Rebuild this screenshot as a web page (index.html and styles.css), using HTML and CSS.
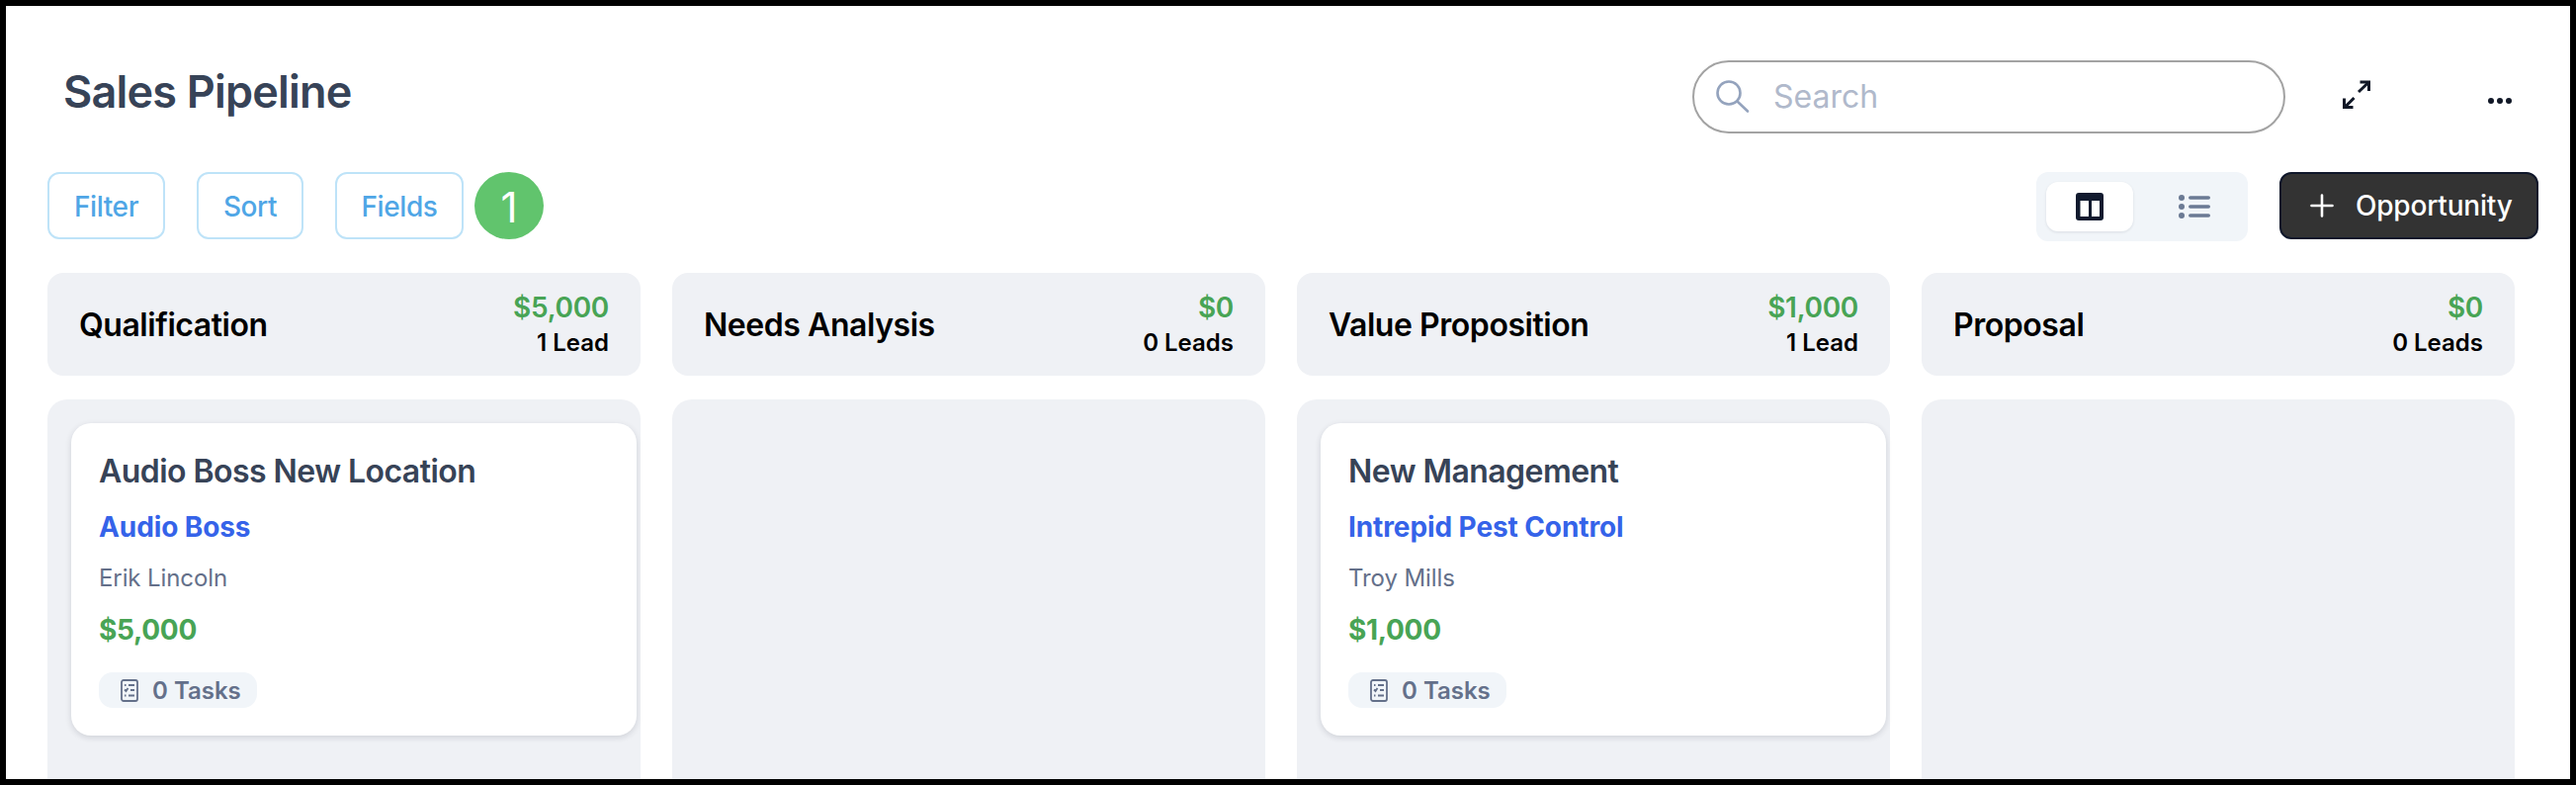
FILE: index.html
```html
<!DOCTYPE html>
<html lang="en">
<head>
<meta charset="utf-8">
<title>Sales Pipeline</title>
<link rel="stylesheet" href="styles.css">
</head>
<body>
<div class="frame">
  <header class="top">
    <h1 class="title">Sales Pipeline</h1>
    <div class="search">
      <svg class="search-icon" width="36" height="36" viewBox="0 0 36 36" fill="none" stroke="#94a3bd" stroke-width="2.6" stroke-linecap="round"><circle cx="14" cy="14" r="11.5"/><path d="M22.5 22.5L33 32.5"/></svg>
      <span class="search-text">Search</span>
    </div>
    <svg class="expand" width="30" height="30" viewBox="0 0 30 30" fill="none" stroke="#111827" stroke-width="3"><path d="M17 12L27.5 2"/><path d="M18.5 2H27.5V11"/><path d="M2.5 28L12.5 18"/><path d="M2.5 18.500V27.500H11.500"/></svg>
    <svg class="dots" width="26" height="8" viewBox="0 0 26 8" fill="#111827"><circle cx="4" cy="4" r="3"/><circle cx="13" cy="4" r="3"/><circle cx="22" cy="4" r="3"/></svg>
  </header>

  <div class="toolbar">
    <button class="ghost ghost-filter">Filter</button>
    <button class="ghost ghost-sort">Sort</button>
    <button class="ghost ghost-fields">Fields</button>
    <span class="badge">1</span>
    <div class="views">
      <span class="view active">
        <svg width="28" height="28" viewBox="0 0 28 28"><rect width="28" height="28" rx="3" fill="#111a2e"/><rect x="4.500" y="8" width="8.500" height="16" fill="#fff"/><rect x="16" y="8" width="8" height="16" fill="#fff"/></svg>
      </span>
      <span class="view">
        <svg width="32" height="24" viewBox="0 0 32 24" fill="#6b7a94"><circle cx="3" cy="3" r="3"/><circle cx="3" cy="12" r="3"/><circle cx="3" cy="21" r="3"/><rect x="10" y="1.200" width="22" height="3.600" rx="1.800"/><rect x="10" y="10.200" width="22" height="3.600" rx="1.800"/><rect x="10" y="19.200" width="22" height="3.600" rx="1.800"/></svg>
      </span>
    </div>
    <button class="primary">
      <svg width="24" height="24" viewBox="0 0 24 24" fill="none" stroke="#fff" stroke-width="2.600" stroke-linecap="round"><path d="M12 1.500V22.500M1.500 12H22.500"/></svg>
      Opportunity
    </button>
  </div>

  <div class="board">
    <section class="column">
      <div class="col-head">
        <h2 class="col-name">Qualification</h2>
        <div class="col-stats"><div class="col-amount">$5,000</div><div class="col-leads">1 Lead</div></div>
      </div>
      <div class="col-body">
        <article class="card">
          <h3 class="card-title">Audio Boss New Location</h3>
          <a class="card-company">Audio Boss</a>
          <div class="card-person">Erik Lincoln</div>
          <div class="card-amount">$5,000</div>
          <span class="tasks">
            <svg width="18" height="23" viewBox="0 0 18 23" fill="none" stroke="#64708a" stroke-width="1.800"><rect x="1" y="1" width="16" height="21" rx="2"/><path d="M4 6h1.500M8 6h6M4 10.500l1.500 1.500 2-3M10 11h4M4 16.500h1.500M8 16.500h6"/></svg>
            0 Tasks
          </span>
        </article>
      </div>
    </section>
    <section class="column">
      <div class="col-head">
        <h2 class="col-name">Needs Analysis</h2>
        <div class="col-stats"><div class="col-amount">$0</div><div class="col-leads">0 Leads</div></div>
      </div>
      <div class="col-body"></div>
    </section>
    <section class="column">
      <div class="col-head">
        <h2 class="col-name">Value Proposition</h2>
        <div class="col-stats"><div class="col-amount">$1,000</div><div class="col-leads">1 Lead</div></div>
      </div>
      <div class="col-body">
        <article class="card">
          <h3 class="card-title">New Management</h3>
          <a class="card-company">Intrepid Pest Control</a>
          <div class="card-person">Troy Mills</div>
          <div class="card-amount">$1,000</div>
          <span class="tasks">
            <svg width="18" height="23" viewBox="0 0 18 23" fill="none" stroke="#64708a" stroke-width="1.800"><rect x="1" y="1" width="16" height="21" rx="2"/><path d="M4 6h1.500M8 6h6M4 10.500l1.500 1.500 2-3M10 11h4M4 16.500h1.500M8 16.500h6"/></svg>
            0 Tasks
          </span>
        </article>
      </div>
    </section>
    <section class="column">
      <div class="col-head">
        <h2 class="col-name">Proposal</h2>
        <div class="col-stats"><div class="col-amount">$0</div><div class="col-leads">0 Leads</div></div>
      </div>
      <div class="col-body"></div>
    </section>
  </div>
</div>
</body>
</html>
```

FILE: styles.css
```css
* { box-sizing: border-box; }
html, body { margin: 0; padding: 0; background: #000; }
body { font-family: Inter, "Liberation Sans", sans-serif; }

.frame {
  width: 2606px;
  height: 794px;
  border: 6px solid #000;
  background: #fff;
  overflow: hidden;
  padding: 0 0 0 42px;
}

.top {
  display: flex;
  align-items: flex-start;
  height: 168px;
  padding: 55px 0 0 16px;
}
.title {
  margin: 2px 0 0;
  font-size: 45px;
  font-weight: 600;
  color: #374357;
  line-height: 60px;
  letter-spacing: -0.8px;
  width: 1648px;
}
.search {
  display: flex;
  align-items: center;
  width: 600px;
  height: 74px;
  border: 2px solid #a3a3a3;
  border-radius: 37px;
  padding-left: 21px;
}
.search-icon { margin-right: 23px; }
.search-text { font-size: 32px; color: #b0b9cb; line-height: 40px; }
.expand { margin: 20px 0 0 57px; }
.dots { margin: 37px 0 0 117px; }

.toolbar {
  display: flex;
  align-items: flex-start;
  height: 70px;
  width: 2520px;
}
.ghost {
  height: 68px;
  padding: 2px 0 0;
  margin-right: 32px;
  border: 2px solid #bee3f8;
  border-radius: 12px;
  background: #fff;
  color: #4fa6e6;
  font: 500 28px Inter, sans-serif;
  letter-spacing: -0.4px;
}
.ghost-filter { width: 119px; }
.ghost-sort { width: 108px; }
.ghost-fields { width: 130px; margin-right: 11px; }
.badge {
  width: 70px;
  height: 68px;
  border-radius: 50%;
  background: #61c46d;
  color: #fff;
  font-size: 42px;
  line-height: 71px;
  text-align: center;
}
.views {
  display: flex;
  margin-left: auto;
  width: 214px;
  height: 70px;
  padding: 10px;
  background: #f1f5f9;
  border-radius: 12px;
}
.view {
  display: flex;
  align-items: center;
  justify-content: center;
  width: 88px;
  height: 50px;
  border-radius: 12px;
}
.view.active { background: #fff; box-shadow: 0 1px 3px rgba(15, 23, 42, 0.1); }
.view:not(.active) { margin-left: 18px; }
.primary {
  display: flex;
  align-items: center;
  gap: 22px;
  height: 68px;
  width: 262px;
  margin-left: 32px;
  padding: 0 0 0 29px;
  background: #333;
  border: 2px solid #0f172a;
  border-radius: 12px;
  color: #fff;
  font: 500 28px Inter, sans-serif;
  letter-spacing: -0.2px;
}

.board {
  display: flex;
  gap: 32px;
  margin-top: 32px;
}
.column { flex: 0 0 600px; }
.col-head {
  display: flex;
  align-items: center;
  justify-content: space-between;
  height: 104px;
  padding: 0 32px;
  background: #eff1f5;
  border-radius: 16px;
}
.col-name { margin: 0; font-size: 32px; font-weight: 600; color: #000; line-height: 40px; letter-spacing: -0.45px; padding-top: 2px; }
.col-stats { text-align: right; padding-top: 2px; }
.col-amount { font-size: 28px; font-weight: 600; color: #48a455; line-height: 36px; letter-spacing: -0.3px; }
.col-leads { font-size: 24px; font-weight: 600; color: #000; line-height: 36px; }

.col-body {
  height: 420px;
  margin-top: 24px;
  padding: 24px 4px 0 24px;
  background: #eff1f5;
  border-radius: 20px;
}
.card {
  height: 316px;
  padding: 29px 28px 0;
  background: #fff;
  border-radius: 20px;
  box-shadow: 0 2px 6px rgba(15, 23, 42, 0.14);
}
.card-title { margin: 0; font-size: 32px; font-weight: 600; color: #374357; line-height: 40px; letter-spacing: -0.55px; }
.card-company { display: block; margin-top: 18px; font-size: 28px; font-weight: 700; color: #3563e9; line-height: 36px; letter-spacing: -0.1px; }
.card-person { margin-top: 18px; font-size: 24px; color: #64708a; line-height: 32px; letter-spacing: -0.1px; }
.card-amount { margin-top: 18px; font-size: 28px; font-weight: 700; color: #48a455; line-height: 36px; letter-spacing: -0.3px; }
.tasks {
  display: inline-flex;
  align-items: center;
  gap: 14px;
  width: 160px;
  height: 36px;
  margin-top: 25px;
  padding-left: 22px;
  background: #f1f5f9;
  border-radius: 14px;
  font-size: 24px;
  font-weight: 600;
  color: #64708a;
}
```
